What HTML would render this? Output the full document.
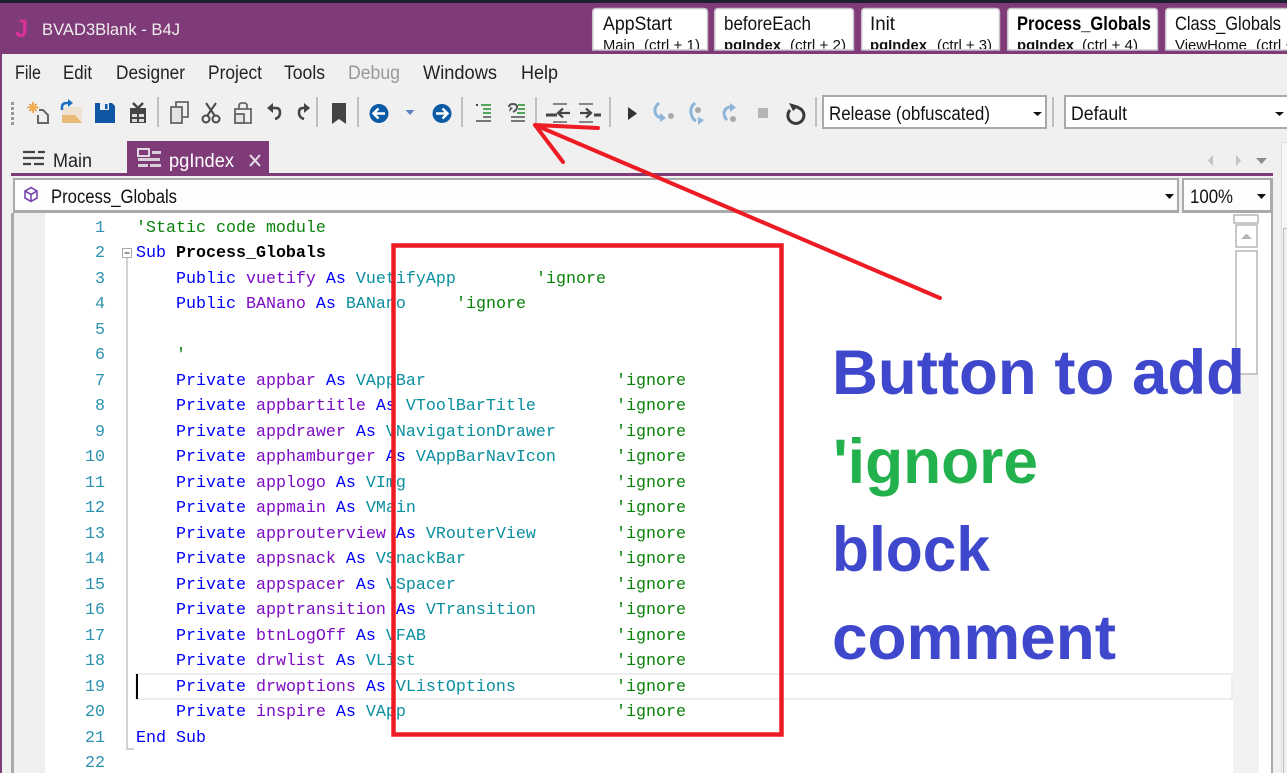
<!DOCTYPE html>
<html><head><meta charset="utf-8"><style>
html,body{margin:0;padding:0;background:#f0f0f0}
#p{position:relative;width:1287px;height:773px;overflow:hidden;background:#f0f0f0}
svg{position:absolute;left:0;top:0}
text{font-family:"Liberation Sans",sans-serif}
.l{position:absolute;left:136px;height:25px;line-height:25px;white-space:pre;font:16.67px/25px "Liberation Mono",monospace;color:#00f;margin-top:1px}
.n{position:absolute;left:60px;width:45px;text-align:right;font:16.67px/25px "Liberation Mono",monospace;color:#2b91af;margin-top:1px}
.v{color:#7d0bc4}.t{color:#0a8f9f}.c{color:#0a820a}.b{color:#000;font-weight:bold}
.g{position:absolute;left:480px;color:#0a820a}
</style></head><body><div id="p">
<svg width="1287" height="773" viewBox="0 0 1287 773">
<rect width="1287" height="3" fill="#1f2132"/>
<rect y="3" width="1287" height="51" fill="#7f3a78"/>
<rect y="54" width="2" height="719" fill="#7f3a78"/>
<text x="15" y="37" font-size="25" font-weight="bold" fill="#d9309a" textLength="13" lengthAdjust="spacingAndGlyphs">J</text>
<text x="42" y="35" font-size="17" fill="#eee" textLength="138" lengthAdjust="spacingAndGlyphs">BVAD3Blank - B4J</text>
<g fill="#fff" stroke="#c9c3cb" stroke-width="1.5">
<path d="M592.7 50V12q0-3.500 3.500-3.500H704q3.500 0 3.500 3.500V50z"/>
<path d="M714.700 50V12q0-3.500 3.500-3.500H850q3.500 0 3.500 3.500V50z"/>
<path d="M861.700 50V12q0-3.500 3.500-3.500H996q3.500 0 3.500 3.500V50z"/>
<path d="M1007.700 50V12q0-3.500 3.500-3.500H1154q3.500 0 3.500 3.500V50z"/>
<path d="M1165.700 50V12q0-3.500 3.500-3.500H1290V50z"/>
</g>
<defs><clipPath id="tc"><rect x="590" y="8" width="697" height="41"/></clipPath></defs>
<g clip-path="url(#tc)" fill="#111">
<g font-size="19">
<text x="603" y="30" textLength="69" lengthAdjust="spacingAndGlyphs">AppStart</text>
<text x="724" y="30" textLength="87" lengthAdjust="spacingAndGlyphs">beforeEach</text>
<text x="870" y="30" textLength="25" lengthAdjust="spacingAndGlyphs">Init</text>
<text x="1017" y="30" font-weight="bold" fill="#000" textLength="134" lengthAdjust="spacingAndGlyphs">Process_Globals</text>
<text x="1175" y="30" textLength="106" lengthAdjust="spacingAndGlyphs">Class_Globals</text>
</g>
<g font-size="15">
<text x="603" y="50" textLength="32" lengthAdjust="spacingAndGlyphs">Main</text>
<text x="644" y="50" textLength="56" lengthAdjust="spacingAndGlyphs">(ctrl + 1)</text>
<text x="724" y="50" font-weight="bold" textLength="57" lengthAdjust="spacingAndGlyphs">pgIndex</text>
<text x="790" y="50" textLength="56" lengthAdjust="spacingAndGlyphs">(ctrl + 2)</text>
<text x="870" y="50" font-weight="bold" textLength="57" lengthAdjust="spacingAndGlyphs">pgIndex</text>
<text x="937" y="50" textLength="55" lengthAdjust="spacingAndGlyphs">(ctrl + 3)</text>
<text x="1017" y="50" font-weight="bold" textLength="57" lengthAdjust="spacingAndGlyphs">pgIndex</text>
<text x="1082" y="50" textLength="56" lengthAdjust="spacingAndGlyphs">(ctrl + 4)</text>
<text x="1175" y="50" textLength="72" lengthAdjust="spacingAndGlyphs">ViewHome</text>
<text x="1256" y="50" textLength="56" lengthAdjust="spacingAndGlyphs">(ctrl + 5)</text>
</g></g>
<g font-size="19" fill="#222">
<text x="15" y="79" textLength="26" lengthAdjust="spacingAndGlyphs">File</text>
<text x="63" y="79" textLength="29" lengthAdjust="spacingAndGlyphs">Edit</text>
<text x="116" y="79" textLength="69" lengthAdjust="spacingAndGlyphs">Designer</text>
<text x="208" y="79" textLength="54" lengthAdjust="spacingAndGlyphs">Project</text>
<text x="284" y="79" textLength="41" lengthAdjust="spacingAndGlyphs">Tools</text>
<text x="348" y="79" fill="#999" textLength="52" lengthAdjust="spacingAndGlyphs">Debug</text>
<text x="423" y="79" textLength="74" lengthAdjust="spacingAndGlyphs">Windows</text>
<text x="521" y="79" textLength="37" lengthAdjust="spacingAndGlyphs">Help</text>
</g>
<!-- toolbar -->
<g fill="#999"><rect x="11" y="102" width="3" height="3"/><rect x="11" y="107" width="3" height="3"/><rect x="11" y="112" width="3" height="3"/><rect x="11" y="117" width="3" height="3"/><rect x="11" y="122" width="3" height="3"/></g>
<g fill="#c0c0c0"><rect x="157" y="97" width="2" height="30"/><rect x="316" y="97" width="2" height="30"/><rect x="357" y="97" width="2" height="30"/><rect x="461" y="97" width="2" height="30"/><rect x="535" y="97" width="2" height="30"/><rect x="609" y="97" width="2" height="30"/><rect x="815" y="97" width="2" height="30"/><rect x="1052" y="97" width="2" height="30"/></g>
<!-- new -->
<g stroke="#e8912a" stroke-width="1.500"><path d="M33 102v11M27.500 107.500h11M29.500 104l7 7M36.500 104l-7 7"/></g><circle cx="33" cy="107.500" r="2.500" fill="#f5b04a"/>
<path d="M39 110h4l5 5v8H38v-8" fill="none" stroke="#666" stroke-width="2"/>
<!-- open -->
<path d="M66 107h16v16H62v-12z" fill="#eee3d3"/><path d="M62 123v-8h13l7 8z" fill="#e9b978"/>
<path d="M62 110v-3q0-4 5-4h3" fill="none" stroke="#1b6fc0" stroke-width="2.500"/><path d="M68 99l5 4-5 4z" fill="#1b6fc0"/>
<!-- save -->
<path d="M95 103h17l3 3v17H95z" fill="#0f57a5"/><rect x="100" y="103" width="9" height="7" fill="#e8eef5"/><rect x="105" y="104" width="2.500" height="5" fill="#0f57a5"/><rect x="100" y="117" width="10" height="6" fill="#0f57a5"/>
<!-- gift -->
<path d="M130 108h16v15h-16z" fill="#444"/><path d="M132 114h5v3h-5zM139 114h5v3h-5zM132 119h5v3h-5zM139 119h5v3h-5z" fill="#ddd"/><path d="M133 103l5 5 5-5" fill="none" stroke="#444" stroke-width="2.500"/>
<!-- copy -->
<path d="M176 107v-5h12v15h-6" fill="none" stroke="#666" stroke-width="1.800"/><rect x="171" y="107" width="11" height="16" fill="#e3e3e3" stroke="#666" stroke-width="1.800"/>
<!-- cut -->
<g fill="none" stroke="#4a4a4a" stroke-width="2"><path d="M206 103l9 13M216 103l-9 13"/><circle cx="206" cy="119" r="3.500"/><circle cx="216" cy="119" r="3.500"/></g>
<!-- paste -->
<path d="M235 109h16v14h-16z" fill="none" stroke="#666" stroke-width="1.800"/><path d="M239 109v-3q0-3 3-3h2q3 0 3 3v3" fill="none" stroke="#666" stroke-width="1.800"/><rect x="235" y="114" width="9" height="9" fill="#e3e3e3" stroke="#666" stroke-width="1.800"/>
<!-- undo/redo -->
<path d="M270 108h6q4 0 4 4.500 0 5-5 6.500" fill="none" stroke="#444" stroke-width="2.500"/><path d="M273 103l-6 5 6 5z" fill="#444"/>
<path d="M309 108h-6q-4 0-4 4.500 0 5 5 6.500" fill="none" stroke="#444" stroke-width="2.500"/><path d="M304 103l6 5-6 5z" fill="#444"/>
<!-- bookmark -->
<path d="M332 103h14v21l-7-5-7 5z" fill="#444"/>
<!-- back/forward -->
<circle cx="379" cy="113.500" r="9.500" fill="#0b5aa5"/><path d="M385 113.500h-11M378.500 108.500l-5 5 5 5" fill="none" stroke="#fff" stroke-width="2.500"/>
<path d="M405.500 110h9l-4.500 5z" fill="#5b82bf"/>
<circle cx="442" cy="113.500" r="9.500" fill="#0b5aa5"/><path d="M436 113.500h11M442.500 108.500l5 5-5 5" fill="none" stroke="#fff" stroke-width="2.500"/>
<!-- comment -->
<g stroke-width="1.800" fill="none"><path d="M476 105h2" stroke="#333"/><path d="M481 105h10M483 109h8M483 113h8" stroke="#3f9a45"/><path d="M483 117h8M476 121h15" stroke="#666"/></g>
<!-- uncomment -->
<path d="M509 107q0-3 4-3t4 3-4 5" fill="none" stroke="#555" stroke-width="2"/><path d="M513 108l-4 4 1-5z" fill="#555"/>
<g stroke-width="1.800" fill="none"><path d="M518 105h7M518 109h7M517 113h8" stroke="#3f9a45"/><path d="M511 117h14M511 121h14" stroke="#666"/></g>
<!-- outdent/indent -->
<g fill="none" stroke="#444"><path d="M553 104h14M553 122h14" stroke-width="1.800" stroke="#777"/><path d="M546 115h11" stroke-width="3"/><path d="M570 113h-12M563 108.500l-5 4.500 5 4.500" stroke-width="2.200"/></g>
<g fill="none" stroke="#444"><path d="M579 104h14M579 122h14" stroke-width="1.800" stroke="#777"/><path d="M594 115h7" stroke-width="3"/><path d="M580 113h11M586 108.500l5 4.500-5 4.500" stroke-width="2.200"/></g>
<!-- play -->
<path d="M628 107l9 6.500-9 6.500z" fill="#333"/>
<!-- step icons -->
<g fill="none" stroke="#8db5d8" stroke-width="3"><path d="M659 103q-5 4-4 9t7 6"/><path d="M695 103q-5 4-4 10t5 8"/><path d="M733 107h-2q-6 0-7 6 0 4 3 7"/></g>
<path d="M660 113v9l6-4zM698 117v8l6-5zM730 103v9l6-4.500z" fill="#8db5d8"/>
<circle cx="671" cy="116" r="3" fill="#aaa"/><circle cx="698" cy="110" r="3" fill="#aaa"/><circle cx="733" cy="119" r="3" fill="#aaa"/>
<rect x="758" y="108" width="10" height="10" fill="#b5b5b5"/>
<!-- restart -->
<path d="M790 110A8 8 0 1 0 797 107.500" fill="none" stroke="#3a3a3a" stroke-width="3"/><path d="M789 103l10 3-6 5z" fill="#3a3a3a"/>
<!-- combos -->
<rect x="823" y="96" width="223" height="32" fill="#fff" stroke="#a9a9a9" stroke-width="2"/>
<text x="829" y="120" font-size="19" fill="#111" textLength="161" lengthAdjust="spacingAndGlyphs">Release (obfuscated)</text>
<path d="M1033 112h9l-4.500 4z" fill="#111"/>
<rect x="1065" y="96" width="230" height="32" fill="#fff" stroke="#a9a9a9" stroke-width="2"/>
<text x="1071" y="120" font-size="19" fill="#111" textLength="56" lengthAdjust="spacingAndGlyphs">Default</text>
<path d="M1275 112h9l-4.500 4z" fill="#111"/>
<!-- doc tabs -->
<g fill="none" stroke="#444" stroke-width="2.200"><path d="M23 152h12M38 152h7M23 158h21M23 164h8M34 164h10"/></g>
<text x="53" y="167" font-size="19" fill="#222" textLength="39" lengthAdjust="spacingAndGlyphs">Main</text>
<rect x="127" y="141" width="142" height="33" fill="#7f3a78"/>
<g fill="#d8d0d8"><rect x="138" y="149" width="11" height="7" fill="none" stroke="#e0d8e0" stroke-width="2"/><rect x="152" y="151" width="9" height="3"/><rect x="138" y="158" width="22" height="3"/><rect x="138" y="164" width="10" height="3"/><rect x="150" y="164" width="11" height="3"/></g>
<text x="169" y="167" font-size="19" fill="#fff" textLength="65" lengthAdjust="spacingAndGlyphs">pgIndex</text>
<path d="M250 155l10 11M260 155l-10 11" stroke="#e6dfe6" stroke-width="2"/>
<path d="M1213 155v11l-5-5.500zM1236 155v11l5-5.500z" fill="#c4c4c4"/><path d="M1256 158h11l-5.500 6z" fill="#8c8c8c"/>
<rect x="1281.500" y="142.500" width="6" height="631" fill="#f6f6f6" stroke="#ddd"/>
<rect x="1283.500" y="228.500" width="4" height="545" fill="#f0f0f0" stroke="#bbb"/>
<rect x="11" y="173" width="1262" height="3" fill="#7f3a78"/>
<!-- editor frame -->
<rect x="13" y="178" width="1166" height="35" fill="#aaa"/>
<rect x="1182" y="178" width="91" height="35" fill="#aaa"/>
<rect x="11" y="213" width="262" height="560" fill="#aaa"/>
<rect x="1271" y="213" width="2" height="560" fill="#aaa"/>
<rect x="15" y="180" width="1162" height="30" fill="#fdfdfd"/>
<rect x="1184" y="180" width="86" height="30" fill="#fdfdfd"/>
<rect x="14" y="213" width="1257" height="560" fill="#fff"/>
<rect x="14" y="213" width="31" height="560" fill="#efefef"/>
<path d="M25 191l6-3.500 6 3.500v7l-6 3.500-6-3.500zM25 191l6 3.500 6-3.500M31 194.500v7" fill="none" stroke="#7a45b0" stroke-width="1.600"/>
<text x="51" y="203" font-size="19" fill="#111" textLength="126" lengthAdjust="spacingAndGlyphs">Process_Globals</text>
<path d="M1165 194h9l-4.500 5z" fill="#111"/>
<text x="1190" y="203" font-size="19" fill="#111" textLength="43" lengthAdjust="spacingAndGlyphs">100%</text>
<path d="M1257 194h9l-4.500 5z" fill="#111"/>
<!-- scrollbar -->
<rect x="1233" y="374" width="26" height="399" fill="#f2f2f2"/>
<rect x="1234" y="215" width="24" height="8" fill="#fff" stroke="#b5b5b5" stroke-width="1.500"/>
<rect x="1236" y="225" width="21" height="22" fill="#fff" stroke="#b5b5b5" stroke-width="1.500"/>
<path d="M1241 239h11l-5.500-5.500z" fill="#b5b5b5"/>
<rect x="1236" y="251" width="21" height="123" fill="#fff" stroke="#b5b5b5" stroke-width="1.500"/>
<!-- folding -->
<rect x="122.500" y="248.500" width="9" height="9" fill="#fff" stroke="#aaa"/><path d="M124.500 253h5" stroke="#333"/>
<path d="M127 258V749H134" fill="none" stroke="#b5b5b5" stroke-width="1.200"/>
<rect x="136" y="674" width="1096" height="25" fill="#fff" stroke="#ededed" stroke-width="2"/>
<rect x="136" y="674" width="2" height="25" fill="#000"/>
</svg>
<div class="n" style="top:215px">1</div><div class="n" style="top:240px">2</div><div class="n" style="top:266px">3</div><div class="n" style="top:291px">4</div><div class="n" style="top:317px">5</div><div class="n" style="top:342px">6</div><div class="n" style="top:368px">7</div><div class="n" style="top:393px">8</div><div class="n" style="top:419px">9</div><div class="n" style="top:444px">10</div><div class="n" style="top:470px">11</div><div class="n" style="top:495px">12</div><div class="n" style="top:521px">13</div><div class="n" style="top:546px">14</div><div class="n" style="top:572px">15</div><div class="n" style="top:597px">16</div><div class="n" style="top:623px">17</div><div class="n" style="top:648px">18</div><div class="n" style="top:674px">19</div><div class="n" style="top:699px">20</div><div class="n" style="top:725px">21</div><div class="n" style="top:750px">22</div>
<div class="l c" style="top:215px">'Static code module</div>
<div class="l" style="top:240px">Sub <span class="b">Process_Globals</span></div>
<div class="l" style="top:266px">    Public <span class="v">vuetify</span> As <span class="t">VuetifyApp</span><span class="g" style="left:400px">'ignore</span></div>
<div class="l" style="top:291px">    Public <span class="v">BANano</span> As <span class="t">BANano</span><span class="g" style="left:320px">'ignore</span></div>
<div class="l c" style="top:342px">    '</div>
<div class="l" style="top:368px">    Private <span class="v">appbar</span> As <span class="t">VAppBar</span><span class="g">'ignore</span></div>
<div class="l" style="top:393px">    Private <span class="v">appbartitle</span> As <span class="t">VToolBarTitle</span><span class="g">'ignore</span></div>
<div class="l" style="top:419px">    Private <span class="v">appdrawer</span> As <span class="t">VNavigationDrawer</span><span class="g">'ignore</span></div>
<div class="l" style="top:444px">    Private <span class="v">apphamburger</span> As <span class="t">VAppBarNavIcon</span><span class="g">'ignore</span></div>
<div class="l" style="top:470px">    Private <span class="v">applogo</span> As <span class="t">VImg</span><span class="g">'ignore</span></div>
<div class="l" style="top:495px">    Private <span class="v">appmain</span> As <span class="t">VMain</span><span class="g">'ignore</span></div>
<div class="l" style="top:521px">    Private <span class="v">approuterview</span> As <span class="t">VRouterView</span><span class="g">'ignore</span></div>
<div class="l" style="top:546px">    Private <span class="v">appsnack</span> As <span class="t">VSnackBar</span><span class="g">'ignore</span></div>
<div class="l" style="top:572px">    Private <span class="v">appspacer</span> As <span class="t">VSpacer</span><span class="g">'ignore</span></div>
<div class="l" style="top:597px">    Private <span class="v">apptransition</span> As <span class="t">VTransition</span><span class="g">'ignore</span></div>
<div class="l" style="top:623px">    Private <span class="v">btnLogOff</span> As <span class="t">VFAB</span><span class="g">'ignore</span></div>
<div class="l" style="top:648px">    Private <span class="v">drwlist</span> As <span class="t">VList</span><span class="g">'ignore</span></div>
<div class="l" style="top:674px">    Private <span class="v">drwoptions</span> As <span class="t">VListOptions</span><span class="g">'ignore</span></div>
<div class="l" style="top:699px">    Private <span class="v">inspire</span> As <span class="t">VApp</span><span class="g">'ignore</span></div>
<div class="l" style="top:725px">End Sub</div>
<svg width="1287" height="773" viewBox="0 0 1287 773">
<rect x="393.500" y="245.500" width="388" height="489" fill="none" stroke="#ed1c24" stroke-width="4.500"/>
<path d="M940 298L535 125M535 125L598 128M535 125L563 162" fill="none" stroke="#ed1c24" stroke-width="4" stroke-linecap="round"/>
<g font-weight="bold" font-size="63" fill="#3f48cc">
<text x="832" y="394" textLength="413" lengthAdjust="spacingAndGlyphs">Button to add</text>
<text x="833" y="483" fill="#22b14c" textLength="205" lengthAdjust="spacingAndGlyphs">'ignore</text>
<text x="832" y="571" textLength="158" lengthAdjust="spacingAndGlyphs">block</text>
<text x="832" y="659" textLength="284" lengthAdjust="spacingAndGlyphs">comment</text>
</g></svg>
</div></body></html>
